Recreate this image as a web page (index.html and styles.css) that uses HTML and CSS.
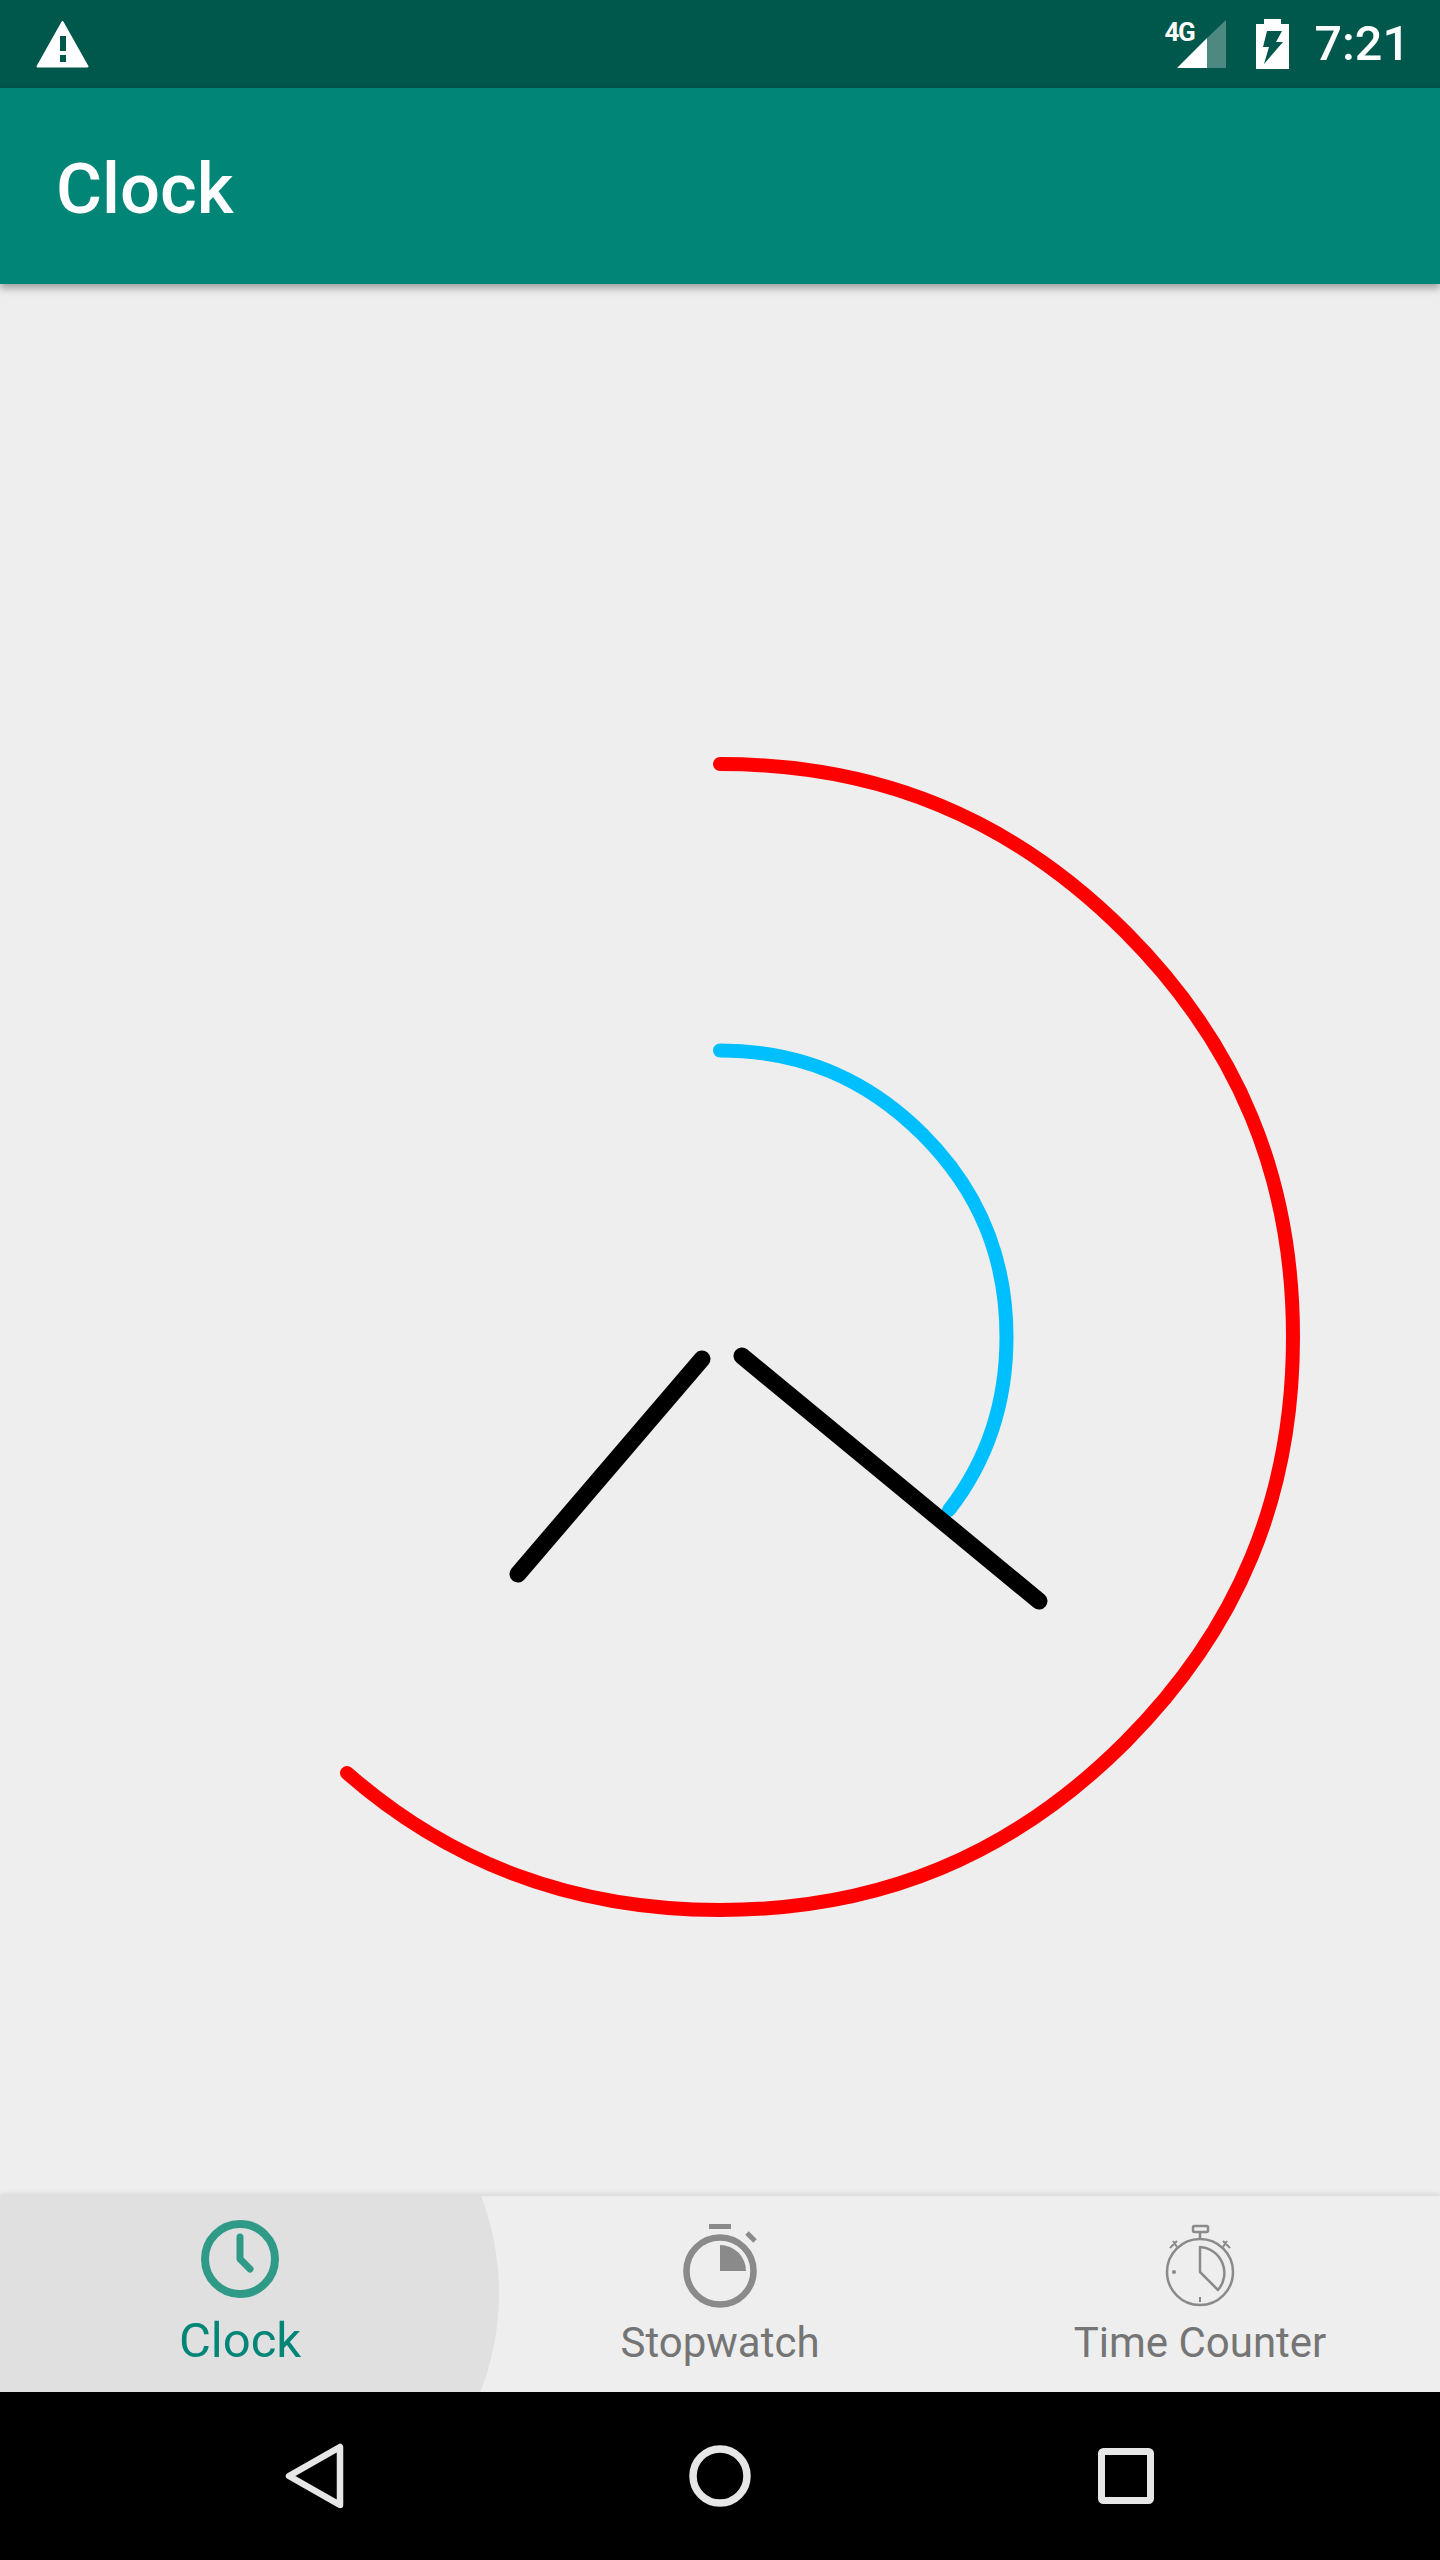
FILE: index.html
```html
<!DOCTYPE html>
<html>
  <head>
    <title>Clock</title>
    <meta name="viewport" content="width=device-width, initial-scale=1.0" />
    <link rel="stylesheet" href="styles.css">
  </head>
  <body>
    <div class="status-bar">
      <svg class="warning-icon" width="53" height="47" viewBox="0 0 53 47">
        <path fill-rule="evenodd" d="M26.5 1 L51.5 45.5 H1.5 Z M23 14 V31 H31 V14 Z M23 33 V42 H31 V33 Z" fill="#fff" stroke="#fff" stroke-width="2" stroke-linejoin="round" />
      </svg>
      <div class="status-right">
        <div class="signal">
          <span class="signal-text">4G</span>
          <svg class="signal-icon" width="49" height="48" viewBox="0 0 49 48">
            <path d="M0 48 L30 18 V48 Z" fill="#fff" />
            <path d="M30 18 L49 0 V48 H30 Z" fill="#fff" fill-opacity="0.3" />
          </svg>
        </div>
        <svg class="battery-icon" width="33" height="50" viewBox="0 0 33 50">
          <path fill-rule="evenodd" d="M8 0 H25 V5 H33 V50 H0 V5 H8 Z M11 12 H26 L20 23 H27 L8 45 L13 28 H7 Z" fill="#fff" />
        </svg>
        <span class="status-time">7:21</span>
      </div>
    </div>

    <div class="app-bar">Clock</div>

    <div class="clock-area">
      <!-- viewBox keeps the page coordinates of the dial -->
      <svg class="clock-canvas" width="1440" height="1912" viewBox="0 284 1440 1912">
        <path class="arc arc-red" d="M720 764 C880 764 1012.1 818.7 1125.2 931.8 C1238.3 1044.9 1293 1177 1293 1337 C1293 1497 1238.3 1629.1 1125.2 1742.2 C1012.1 1855.3 880 1910 720 1910 C574.4 1910 451.9 1864.7 347 1773" />
        <path class="arc arc-blue" d="M720 1050.5 C800 1050.5 866 1077.8 922.6 1134.4 C979.2 1191 1006.5 1257 1006.5 1337 C1006.5 1403.4 987.7 1460.2 949 1510" />
        <line class="hand" x1="742" y1="1356" x2="1039" y2="1601" />
        <line class="hand" x1="702" y1="1359" x2="518" y2="1574" />
      </svg>
    </div>

    <div class="tabs">
      <div class="ripple"></div>
      <div class="tab tab-active">
        <svg class="tab-icon" width="96" height="96" viewBox="0 0 96 96">
          <circle cx="48" cy="47" r="35" fill="none" stroke="#2f9a88" stroke-width="8" />
          <path d="M48 25 V47 L58 57" fill="none" stroke="#2f9a88" stroke-width="7" stroke-linecap="round" stroke-linejoin="round" />
        </svg>
        <span class="tab-label">Clock</span>
      </div>
      <div class="tab">
        <svg class="tab-icon" width="96" height="96" viewBox="0 0 96 96">
          <rect x="37" y="12" width="22" height="5" fill="#8a8a8a" />
          <path d="M75 21 L83 29" stroke="#8a8a8a" stroke-width="5" />
          <circle cx="48" cy="59" r="33.5" fill="none" stroke="#8a8a8a" stroke-width="6.5" />
          <path d="M48 33 A26 26 0 0 1 74 59 H48 Z" fill="#8a8a8a" />
        </svg>
        <span class="tab-label">Stopwatch</span>
      </div>
      <div class="tab">
        <svg class="tab-icon" width="96" height="96" viewBox="0 0 96 96">
          <g fill="none" stroke="#8a8a8a">
            <circle cx="48" cy="60" r="33" stroke-width="2.5" />
            <rect x="41" y="14" width="15" height="6" rx="1.5" stroke-width="2.5" />
            <path d="M48 20 V27" stroke-width="2.5" />
            <path d="M18 36 L25 29 M21 29 L25 35 M78 36 L71 29 M75 29 L71 35" stroke-width="2" />
            <path d="M48 60 V35 A26 26 0 0 1 66 78 Z" stroke-width="2.5" stroke-linejoin="round" />
            <path d="M48 85 V90" stroke-width="2" />
          </g>
          <circle cx="22" cy="60" r="2" fill="#8a8a8a" />
        </svg>
        <span class="tab-label">Time Counter</span>
      </div>
    </div>

    <div class="nav-bar">
      <svg width="60" height="68" viewBox="0 0 60 68">
        <path d="M55 5 V63 L4 34 Z" fill="none" stroke="#e6e6e6" stroke-width="6.5" stroke-linejoin="round" />
      </svg>
      <svg width="62" height="62" viewBox="0 0 62 62">
        <circle cx="31" cy="31" r="27" fill="none" stroke="#e6e6e6" stroke-width="7.5" />
      </svg>
      <svg class="nav-square" width="56" height="56" viewBox="0 0 56 56">
        <rect x="3.5" y="3.5" width="49" height="49" rx="2" fill="none" stroke="#e6e6e6" stroke-width="7" />
      </svg>
    </div>
  </body>
</html>
```

FILE: styles.css
```css
body {
  margin: 0;
  width: 1440px;
  height: 2560px;
  display: flex;
  flex-direction: column;
  overflow: hidden;
  background-color: #eeeeee;
  font-family: Roboto, "Liberation Sans", sans-serif;
}
svg {
  display: block;
}

.status-bar {
  height: 88px;
  flex: none;
  display: flex;
  align-items: center;
  justify-content: space-between;
  padding: 0 30px 0 36px;
  background-color: #00574b;
  color: #fff;
}
.status-right {
  display: flex;
  align-items: center;
}
.signal {
  display: flex;
  width: 61px;
  height: 48px;
  position: relative;
  margin-right: 30px;
  justify-content: flex-end;
}
.signal-text {
  position: absolute;
  left: 0;
  top: -3px;
  font-size: 26px;
  font-weight: 700;
  letter-spacing: -1.5px;
}
.status-time {
  font-size: 48.5px;
  font-weight: 500;
  margin-left: 26px;
  line-height: 58px;
}

.app-bar {
  height: 190px;
  flex: none;
  display: flex;
  align-items: center;
  padding: 6px 0 0 56px;
  position: relative;
  z-index: 2;
  font-size: 70.5px;
  font-weight: 500;
  color: #fff;
  background-color: #008577;
  box-shadow: 0 4px 8px rgba(0, 0, 0, 0.35);
}

.clock-area {
  flex: 1;
}
.arc {
  fill: none;
  stroke-width: 14;
  stroke-linecap: round;
}
.arc-red {
  stroke: #ff0000;
}
.arc-blue {
  stroke: #00bfff;
}
.hand {
  stroke: #000;
  stroke-width: 17;
  stroke-linecap: round;
}

.tabs {
  height: 196px;
  flex: none;
  display: flex;
  position: relative;
  background-color: #eeeeee;
  box-shadow: 0 -2px 6px rgba(0, 0, 0, 0.1);
  clip-path: inset(-10px 0 0 0);
}
.ripple {
  position: absolute;
  left: -41px;
  top: -173px;
  width: 540px;
  height: 540px;
  border-radius: 50%;
  background-color: #e0e0e0;
  clip-path: inset(173px 0 171px 0);
}
.tab {
  flex: 1;
  display: flex;
  flex-direction: column;
  align-items: center;
  padding-top: 16px;
  position: relative;
}
.tab-label {
  font-size: 42px;
  line-height: 60px;
  margin-top: 5px;
  color: #757575;
}
.tab-active .tab-label {
  font-size: 49px;
  margin-top: 3px;
  color: #008577;
}

.nav-bar {
  height: 168px;
  flex: none;
  display: flex;
  align-items: center;
  gap: 344px;
  padding-left: 285px;
  background-color: #000;
}
.nav-square {
  margin-left: 3px;
}
```
